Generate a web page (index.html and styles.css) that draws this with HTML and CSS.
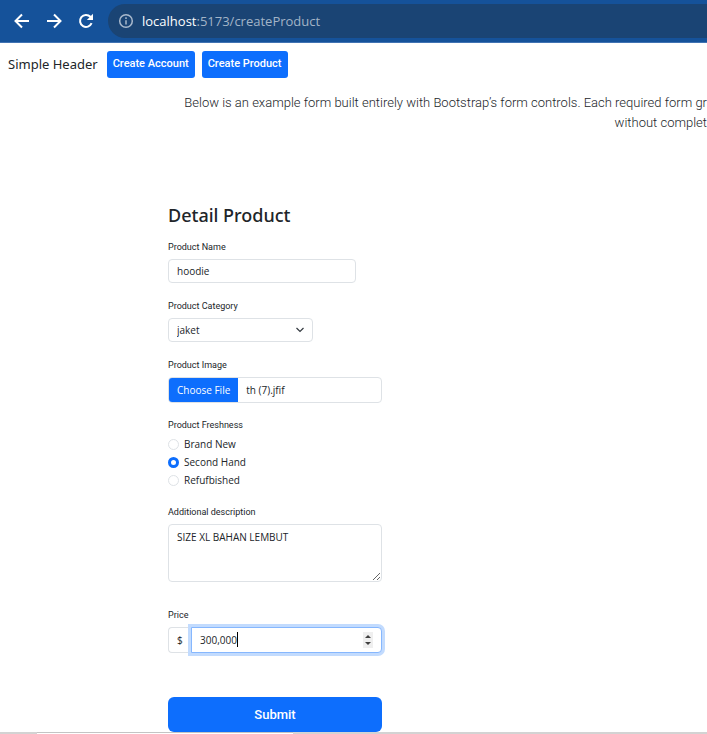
FILE: index.html
```html
<!DOCTYPE html>
<html lang="en">
<head>
<meta charset="utf-8">
<meta name="viewport" content="width=device-width, initial-scale=1">
<title>Create Product</title>
<link rel="stylesheet" href="styles.css">
</head>
<body>
<div class="toolbar">
  <button class="tool" type="button" aria-label="Back"><svg viewBox="0 0 16 16"><path d="M15 8H2M8 1.500L1.500 8L8 14.500"/></svg></button>
  <button class="tool" type="button" aria-label="Forward"><svg viewBox="0 0 16 16"><path d="M1 8H14M8 1.500L14.500 8L8 14.500"/></svg></button>
  <button class="tool" type="button" aria-label="Reload"><svg viewBox="0 0 16 16"><path d="M13.600 10.200A6 6 0 1 1 12.400 3.800L13.800 5.200"/><path class="solid" d="M15 .8V7H8.800Z"/></svg></button>
  <div class="address">
    <svg class="info" viewBox="0 0 16 16"><circle cx="8" cy="8" r="6.300"/><path d="M8 7.200V11.500M8 4.300V5.900"/></svg>
    <span class="url"><span class="host">localhost</span>:5173/createProduct</span>
  </div>
</div>
<header class="header">
  <span class="brand">Simple Header</span>
  <a class="nav-button" href="#account">Create Account</a>
  <a class="nav-button" href="#product">Create Product</a>
</header>
<main>
  <p class="lead">Below is an example form built entirely with Bootstrap’s form controls. Each required form gr<br>without complet</p>
  <form class="form" id="product">
    <h1>Detail Product</h1>
    <div class="field">
      <label class="label" for="name">Product Name</label>
      <input class="control name" id="name" type="text" value="hoodie">
    </div>
    <div class="field">
      <label class="label" for="category">Product Category</label>
      <div class="select-wrap">
        <select class="control" id="category"><option>jaket</option></select>
        <svg class="chevron" viewBox="0 0 10 10"><path d="M1.500 3L5 6.500L8.500 3"/></svg>
      </div>
    </div>
    <div class="field image-field">
      <label class="label" for="image">Product Image</label>
      <input class="control file" id="image" type="file">
    </div>
    <fieldset class="field freshness">
      <legend class="label">Product Freshness</legend>
      <label class="choice"><input type="radio" name="freshness">Brand New</label>
      <label class="choice"><input type="radio" name="freshness" checked>Second Hand</label>
      <label class="choice"><input type="radio" name="freshness">Refufbished</label>
    </fieldset>
    <div class="field description">
      <label class="label" for="description">Additional description</label>
      <textarea class="control" id="description">SIZE XL BAHAN LEMBUT</textarea>
    </div>
    <div class="field price-field">
      <label class="label" for="price">Price</label>
      <div class="price">
        <span class="currency">$</span>
        <div class="amount">
          <input class="control" id="price" type="text" inputmode="numeric" value="300,000">
          <span class="caret"></span>
          <span class="spinner">
            <button type="button" aria-label="Increase"><svg viewBox="0 0 6 4"><path d="M0 4L3 1L6 4Z"/></svg></button>
            <button type="button" aria-label="Decrease"><svg viewBox="0 0 6 4"><path d="M0 0L3 3L6 0Z"/></svg></button>
          </span>
        </div>
      </div>
    </div>
    <button class="submit" type="submit">Submit</button>
  </form>
</main>
<div class="bottom-edge"><div class="bottom-tab"></div></div>
<script src="script.js"></script>
</body>
</html>
```
FILE: styles.css
```css
* { box-sizing: border-box; }
html, body { margin: 0; }
body {
  background: #fff;
  color: #212529;
  font-family: "Open Sans", "Noto Sans", sans-serif;
  font-size: 10px;
  overflow-x: hidden;
}
button, input, select, textarea { font: inherit; color: inherit; }

.toolbar {
  display: flex;
  align-items: center;
  height: 43px;
  padding-left: 14px;
  gap: 16px;
  background: #15529a;
  border-bottom: 1px solid #4173b3;
}
.tool { width: 16px; height: 16px; padding: 0; border: 0; background: none; }
.tool svg { display: block; fill: none; stroke: #fff; stroke-width: 2; }
.tool .solid { fill: #fff; stroke: none; }
.address {
  flex: 1;
  display: flex;
  align-items: center;
  height: 34px;
  gap: 8px;
  padding-left: 10px;
  margin-left: -2px;
  border-radius: 17px 0 0 17px;
  background: #1a4474;
}
.info { width: 16px; height: 16px; fill: none; stroke: #a9b9cc; stroke-width: 1.5; }
.url { color: #a3b4c7; font-size: 13px; }
.host { color: #fff; }

.header { display: flex; align-items: center; height: 42px; padding: 0 8px; gap: 7px; }
.brand { margin-right: 2px; font: 13px/20px "Noto Sans", sans-serif; }
.nav-button {
  height: 27px;
  padding: 0 6px;
  border-radius: 3px;
  background: #0d6efd;
  color: #fff;
  font: 500 11px/25px Roboto, sans-serif;
  text-decoration: none;
}

.lead {
  margin: 8px 0 0;
  font: 300 13px/20px Roboto, sans-serif;
  text-align: right;
  white-space: nowrap;
}
.form { display: flex; flex-direction: column; width: 214px; margin: 70px 0 0 168px; }
h1 { margin: 0 0 13px; font: 500 18px/25px "Noto Sans", sans-serif; }
.field { margin: 0 0 17px; padding: 0; border: 0; }
.label { display: block; margin-bottom: 5px; padding: 0; font: 9px/13px Roboto, sans-serif; }
.control {
  display: block;
  width: 100%;
  height: 24px;
  padding: 0 8px;
  border: 1px solid #dee2e6;
  border-radius: 4px;
  background: #fff;
}
.name { width: 188px; }
.select-wrap { position: relative; width: 145px; }
.select-wrap select { appearance: none; }
.chevron {
  position: absolute;
  top: 7px;
  right: 8px;
  width: 10px;
  height: 10px;
  fill: none;
  stroke: #343a40;
  stroke-width: 1.2;
  pointer-events: none;
}
.file { height: 26px; padding: 0; line-height: 24px; overflow: hidden; }
.file::file-selector-button {
  height: 24px;
  margin: 0 8px 0 0;
  padding: 0 8px;
  border: 0;
  background: #0d6efd;
  color: #fff;
  font: inherit;
}
.image-field { margin-bottom: 16px; }
.freshness .label { margin-bottom: 3px; }
.choice { display: flex; align-items: center; height: 18px; gap: 5px; }
.choice input {
  appearance: none;
  width: 11px;
  height: 11px;
  margin: 0;
  border: 1px solid #dee2e6;
  border-radius: 50%;
}
.choice input:checked { border: 3px solid #0d6efd; }
.description { margin-bottom: 27px; }
.description textarea { height: 58px; padding: 4px 8px; line-height: 17px; resize: vertical; }
.price { display: flex; }
.currency {
  width: 23px;
  height: 26px;
  padding-left: 8px;
  border: 1px solid #dee2e6;
  border-right: 0;
  border-radius: 4px 0 0 4px;
  line-height: 24px;
}
.amount { position: relative; flex: 1; }
.amount .control {
  height: 26px;
  border-color: #86b7fe;
  border-radius: 0 4px 4px 0;
  box-shadow: 0 0 0 3px #c2dbfe;
  outline: 0;
}
.caret { position: absolute; top: 5px; left: 46px; width: 1px; height: 15px; background: #000; }
.spinner {
  position: absolute;
  top: 5px;
  right: 9px;
  display: flex;
  flex-direction: column;
  width: 10px;
  height: 16px;
  background: #efefef;
}
.spinner button { flex: 1; display: flex; align-items: center; justify-content: center; padding: 0; border: 0; background: none; }
.spinner svg { width: 6px; height: 4px; fill: #404040; }
.price-field { margin-bottom: 44px; }
.submit {
  height: 35px;
  border: 0;
  border-radius: 6px;
  background: #0d6efd;
  color: #fff;
  font: 500 13px/20px Roboto, sans-serif;
}
.bottom-edge { height: 2px; background: #d3d3d3; padding-left: 37px; }
.bottom-tab { width: 256px; height: 2px; border-top: 1px solid #c4c4c4; background: #fff; }
```
FILE: script.js
```js
const selection = new DataTransfer();
selection.items.add(new File([""], "th (7).jfif", { type: "image/jpeg" }));
document.getElementById("image").files = selection.files;
```
